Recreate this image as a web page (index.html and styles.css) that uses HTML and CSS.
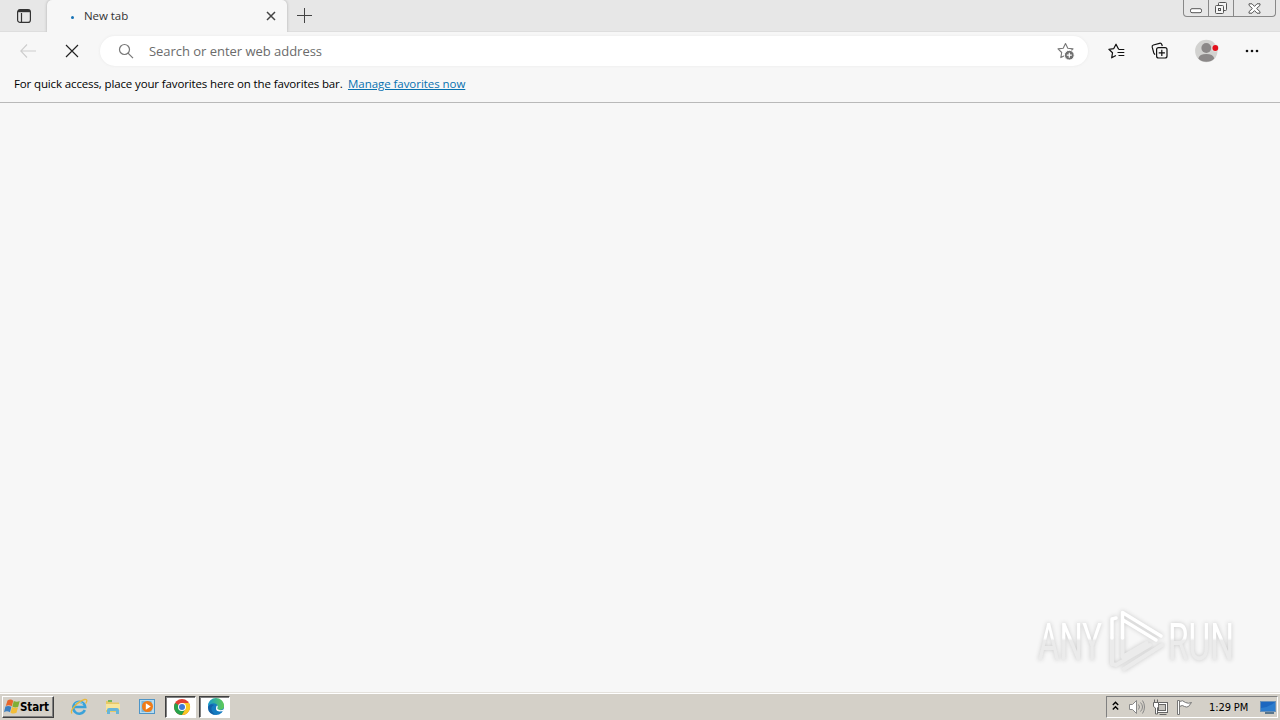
FILE: index.html
```html
<!DOCTYPE html>
<html lang="en">
<head>
	<meta charset="utf-8">
	<title>New tab</title>
	<link rel="stylesheet" href="styles.css">
</head>
<body>
	<!-- Title bar with the tab strip and window buttons. -->
	<header class="titlebar">
		<div class="tab-menu">
			<svg width="16" height="16" viewBox="0 0 16 16" fill="none" stroke="#333">
				<rect x="1.6" y="1.6" width="12.8" height="12.8" rx="2.5" stroke-width="1.2"/>
				<path d="M2 3.5h12M5.500 5v9" stroke-width="1.2"/>
				<path d="M2 3h12" stroke-width="2.400"/>
			</svg>
		</div>
		<div class="tab">
			<span class="spinner"></span>
			<span class="tab-title">New tab</span>
			<svg class="tab-close" width="10" height="10" viewBox="0 0 10 10" stroke="#444" stroke-width="1.500"><path d="M1 1l8 8M9 1l-8 8"/></svg>
		</div>
		<svg class="new-tab" width="15" height="15" viewBox="0 0 15 15" stroke="#444"><path d="M7.5 0v15M0 7.5h15"/></svg>
		<div class="window-buttons">
			<div class="win-btn minimize">
				<svg width="13" height="6" viewBox="0 0 13 6"><rect x=".5" y=".7" width="11" height="4" rx="1.5" fill="#fff" stroke="#555"/></svg>
			</div>
			<div class="win-btn restore">
				<svg width="14" height="14" viewBox="0 0 14 14" fill="#f5f5f5" stroke="#555"><rect x="4.500" y="1.500" width="8" height="8" rx="1"/><rect x="1.500" y="4.500" width="8" height="8" rx="1"/><rect x="4.500" y="7.500" width="2" height="2"/></svg>
			</div>
			<div class="win-btn close">
				<svg width="13" height="11" viewBox="0 0 13 11"><path d="M1 .8h3l2.500 2.600L9 .8h3v1.500L8.600 5.500 12 8.700v1.500H9L6.500 7.600 4 10.200H1V8.700l3.400-3.200L1 2.300z" fill="#fff" stroke="#555"/></svg>
			</div>
		</div>
	</header>

	<!-- Navigation buttons and the address bar. -->
	<nav class="toolbar">
		<svg class="back" width="16" height="14" viewBox="0 0 16 14" fill="none" stroke="#cdcdcd" stroke-width="1.1"><path d="M7 .5L.8 7 7 13.500M1 7h15"/></svg>
		<svg class="stop" width="14" height="14" viewBox="0 0 14 14" stroke="#222" stroke-width="1.150"><path d="M1 1l12 12M13 1L1 13"/></svg>
		<div class="address">
			<svg class="search" width="16" height="16" viewBox="0 0 16 16" fill="none" stroke="#777" stroke-width="1.200"><circle cx="6.500" cy="6.500" r="5"/><path d="M10 10.100l5 5"/></svg>
			<span class="address-text">Search or enter web address</span>
			<svg class="add-favorite" width="19" height="19" viewBox="0 0 19 19" fill="none" stroke="#777">
				<path d="M8.500 1.500l2.300 4.700 5.200.7-3.800 3.600.9 5.100-4.600-2.400-4.700 2.400.9-5.100L1 6.900l5.200-.7z" stroke-width="1.100" stroke-linejoin="round"/>
				<circle cx="12.300" cy="13.200" r="4.900" fill="#707070" stroke="#fff"/>
				<path d="M12.300 10.700v5M9.800 13.200h5" stroke="#fff" stroke-width="1.200"/>
			</svg>
		</div>
		<svg class="favorites-icon" width="18" height="17" viewBox="0 0 18 17" fill="none" stroke="#111" stroke-width="1.200" stroke-linejoin="round"><path d="M11 5.800l-.8-.2L8 1.200 5.800 5.600l-4.900.7 3.600 3.500-.8 5 4.200-2.300M10.500 6.500h5.800M9.500 9.500h6.800M10.500 12.500h5.800"/></svg>
		<svg class="collections" width="18" height="18" viewBox="0 0 18 18" fill="none" stroke="#111" stroke-width="1.200"><path d="M4 12.700L2.800 11 1.200 5.200Q.8 3.500 2.400 3L8.500 1.300q1.700-.4 2.300 1.200l.5 1.700"/><rect x="5.600" y="5.600" width="10.400" height="10.400" rx="2"/><path d="M10.800 7.700v6.200M7.700 10.800h6.200"/></svg>
		<div class="profile">
			<svg width="24" height="24" viewBox="0 0 24 24"><circle cx="11.300" cy="12" r="11.200" fill="#d2d2d0"/><circle cx="11.300" cy="9" r="4.900" fill="#8b8888"/><path d="M3.300 19.500q1.200-4.400 8-4.400t8 4.400q-3 3.300-8 3.300t-8-3.300z" fill="#8b8888"/><circle cx="20.300" cy="9" r="3.600" fill="#e6ece9"/><circle cx="20.300" cy="9" r="2.900" fill="#e3101c"/></svg>
		</div>
		<svg class="more" width="14" height="4" viewBox="0 0 14 4" fill="#111"><circle cx="2" cy="2" r="1.300"/><circle cx="7" cy="2" r="1.300"/><circle cx="12" cy="2" r="1.300"/></svg>
	</nav>

	<div class="favorites-bar">
		<span class="favorites-text">For quick access, place your favorites here on the favorites bar.</span>
		<a class="favorites-link" href="#">Manage favorites now</a>
	</div>

	<!-- Empty page area, the watermark lies over it. -->
	<main class="page">
		<svg class="watermark" width="230" height="76" viewBox="0 0 230 76">
			<defs>
				<linearGradient id="fade" x1="0" y1="-38" x2="0" y2="0" gradientUnits="userSpaceOnUse">
					<stop offset=".5" stop-color="#fff"/>
					<stop offset=".56" stop-color="#ebebeb"/>
				</linearGradient>
			</defs>
			<g fill="url(#fade)" font-size="46">
				<text transform="translate(8 53.5) scale(1 1.130)" textLength="64" lengthAdjust="spacingAndGlyphs">ANY</text>
				<text transform="translate(138 53.5) scale(1 1.130)" textLength="66" lengthAdjust="spacingAndGlyphs">RUN</text>
			</g>
			<g fill="none" stroke-width="4" stroke-linejoin="round" stroke-linecap="round">
				<path d="M82 32v26l4 1 34-20M92.500 32v19l24-14M94 63l38-24" stroke="#ebebeb"/>
				<path d="M86 12l-4 1v19M92.500 32V6.500L131 30M93 14l33 20" stroke="#fff" stroke-width="3.500"/>
			</g>
		</svg>
	</main>

	<footer class="taskbar">
		<div class="start">
			<svg width="16" height="16" viewBox="0 0 16 16"><path d="M3.500 1.500q3-2 5.800.2L7.800 7.300q-3-1.800-6-.2z" fill="#e8662b"/><path d="M9.800 2q3 1.500 5.900.1L14.200 7.700q-3 1.500-5.900-.2z" fill="#80ae35"/><path d="M1.400 7.600q3-1.500 6 .2L6 13.300q-3-1.800-6-.1z" fill="#3c7fc0"/><path d="M8 8.100q3 1.500 6 .1l-1.500 5.600q-3 1.600-6-.1z" fill="#f2bd38"/></svg>
			<span>Start</span>
		</div>
		<div class="quick-launch">
			<svg width="18" height="18" viewBox="0 0 18 18" fill="none"><path d="M14.800 12A6 6 0 1 1 15.200 9H4" stroke="#3ba2d9" stroke-width="2.500"/><path d="M5 6q4-4 8 0" stroke="#81cef0"/><path d="M2 15.500C-1 12 9 3 14.500 1.500q4-.5 1.200 4" stroke="#e9b83b" stroke-width="1.300"/></svg>
			<svg width="18" height="18" viewBox="0 0 18 18"><path d="M2 3h5l1 1.500h7V14H2z" fill="#e7c966"/><path d="M4 2h4v2H4z" fill="#75b65b"/><path d="M2 6h14v6H2z" fill="#f7e59b"/><path d="M3 16v-4q0-2 2-2h8q2 0 2 2v4h-3v-3H6v3z" fill="#67b5d8"/></svg>
			<svg width="18" height="18" viewBox="0 0 18 18"><rect x="1.500" y="1.500" width="15" height="14" fill="#b8dcef" stroke="#4e95c7"/><rect x="3.500" y="3" width="10" height="11" fill="#77b5dc"/><circle cx="9.500" cy="8.500" r="5.500" fill="#f07b16"/><path d="M7.800 5.300v6.400l5-3.200z" fill="#fff"/></svg>
		</div>
		<div class="tasks">
			<div class="task">
				<svg width="18" height="18" viewBox="0 0 18 18"><circle cx="9" cy="9" r="8" fill="#e34133"/><path d="M2.100 5A8 8 0 0 0 9 17l3.500-6L9 9z" fill="#27a34b"/><path d="M9 17a8 8 0 0 0 7-12H9l3.500 6z" fill="#f9c821"/><circle cx="9" cy="9" r="4" fill="#fff"/><circle cx="9" cy="9" r="3" fill="#3f79d8"/></svg>
			</div>
			<div class="task">
				<svg width="18" height="18" viewBox="0 0 18 18"><defs><linearGradient id="edge"><stop stop-color="#159ccf"/><stop offset="1" stop-color="#62cc51"/></linearGradient></defs><circle cx="9" cy="9" r="8" fill="#147bc0"/><path d="M1 8a8 8 0 0 1 16 0q0 4-5 4-3 0-2-2Q12 7 8 5.500 4 4.500 1 8z" fill="url(#edge)"/><path d="M9.500 8q-2 5 3 5.500 3 0 5-1.500v-1q-2 1.500-5 1-3-1-2-2.500.7-1-.2-2z" fill="#fff"/><path d="M1 9q2-4 6-2-4 2-2 6t5 4Q1 17 1 9z" fill="#1261a7"/></svg>
			</div>
		</div>
		<div class="tray">
			<svg class="expand" width="7" height="10" viewBox="0 0 7 10" fill="none" stroke="#000" stroke-width="1.400"><path d="M.8 4L3.500 1.300 6.200 4M.8 8.500l2.700-2.700 2.700 2.700"/></svg>
			<svg width="17" height="16" viewBox="0 0 17 16" fill="none" stroke="#888"><path d="M1.500 5.500h3l4-4v13l-4-4h-3z" fill="#fff"/><path d="M10.500 5.500q2 2.500 0 5M12.500 3.500q4 4.500 0 9M14.500 1.500q4 6.500 0 13"/></svg>
			<svg width="17" height="17" viewBox="0 0 17 17" fill="#fff" stroke="#666"><rect x="4.500" y="3.500" width="11" height="10"/><rect x="6.500" y="5.500" width="7" height="6" fill="#c6c4bf"/><path d="M7.500 15.500h7" fill="none"/><path d="M2.500.5v3M5.500.5v3M1.500 3.500h5v4l-1 1.500v6h-2V9l-2-1.500z"/></svg>
			<svg width="17" height="17" viewBox="0 0 17 17" fill="#fff" stroke="#777"><path d="M1.500 1.500h2v14h-2zM3.500 2.500q3-2 6 1 3 1.500 6 0l-3 4q-2 1-4 0-2-2-5 0z"/></svg>
			<span class="clock">1:29 PM</span>
			<svg class="desktop" width="16" height="16" viewBox="0 0 16 16"><rect x=".5" y="2.500" width="15" height="10" fill="#1c67bf" stroke="#6a91b8"/><path d="M1 9q7 0 14-6v9H1z" fill="#2c7ccd"/><path d="M5 14h9" stroke="#315878" stroke-width="1.500"/></svg>
		</div>
	</footer>
</body>
</html>
```
FILE: styles.css
```css
* {
	box-sizing: border-box;
}

body {
	display: flex;
	flex-direction: column;
	width: 1280px;
	height: 720px;
	margin: 0;
	overflow: hidden;
	background: #f7f7f7;
	color: #000;
	font-family: "Open Sans", "Noto Sans", sans-serif;
	font-size: 12px;
}

svg {
	display: block;
	flex-shrink: 0;
}

/* Title bar */
.titlebar {
	display: flex;
	height: 32px;
	background: #e7e7e7;
	border-bottom: 1px solid #dedede;
}

.tab-menu {
	width: 47px;
	padding: 8px 0 0 16px;
}

.tab {
	display: flex;
	align-items: center;
	width: 240px;
	height: 32px;
	padding: 0 11px 0 24px;
	background: #f7f7f7;
	border-radius: 5px 5px 0 0;
	box-shadow: 0 0 3px #aaa;
	clip-path: inset(0 -3px 0 -3px);
}

.spinner {
	width: 3px;
	height: 3px;
	margin-top: 2px;
	border-radius: 50%;
	background: #1672b5;
}

.tab-title {
	margin: -2px 0 0 10px;
	color: #333;
	font-size: 11.5px;
	letter-spacing: -.05px;
}

.tab-close {
	margin-left: auto;
}

.new-tab {
	margin: 8px 0 0 10px;
}

.window-buttons {
	display: flex;
	height: 17px;
	margin: 0 4px 0 auto;
	border: 1px solid #888;
	border-top: 0;
	border-radius: 0 0 4px 4px;
}

.win-btn {
	display: flex;
	align-items: center;
	justify-content: center;
	width: 25px;
}

.win-btn + .win-btn {
	border-left: 1px solid #888;
}

.win-btn.minimize {
	width: 24px;
	padding-top: 5px;
}

.win-btn.close {
	width: 42px;
}

/* Toolbar */
.toolbar {
	display: flex;
	align-items: center;
	height: 38px;
	padding-left: 20px;
}

.stop {
	margin-left: 29px;
}

.address {
	display: flex;
	align-items: center;
	width: 988px;
	height: 30px;
	margin-left: 21px;
	padding: 0 12px 0 18px;
	border-radius: 15px;
	background: #fff;
	box-shadow: 0 0 3px #e8e8e8;
}

.address-text {
	margin-left: 15px;
	color: #6b6b6b;
	font-size: 13px;
	letter-spacing: -.03px;
}

.add-favorite {
	margin-left: auto;
}

.favorites-icon {
	margin-left: 20px;
}

.collections {
	margin-left: 25px;
}

.profile {
	margin-left: 26px;
}

.more {
	margin-left: 26px;
}

/* Favorites bar */
.favorites-bar {
	display: flex;
	height: 33px;
	padding: 5px 14px;
	border-bottom: 1px solid #b9b9b9;
	font-size: 11.5px;
	line-height: 17px;
	white-space: nowrap;
}

.favorites-text {
	width: 334px;
	letter-spacing: -.13px;
}

.favorites-link {
	color: #0872b0;
	letter-spacing: -.05px;
}

/* Page */
.page {
	position: relative;
	flex: 1;
}

.watermark {
	position: absolute;
	right: 20px;
	bottom: 10px;
	font-family: Roboto, sans-serif;
	filter: drop-shadow(0 0 2px #c8c8c8);
}

/* Taskbar */
.taskbar {
	display: flex;
	align-items: center;
	height: 28px;
	padding: 2px 2px 1px 2px;
	border-top: 1px solid #e4e1dc;
	box-shadow: inset 0 1px #fff;
	background: #d4d0c8;
}

.start {
	display: flex;
	align-items: center;
	width: 52px;
	height: 22px;
	padding-left: 1px;
	border: 1px solid;
	border-color: #fff #404040 #404040 #fff;
	box-shadow: inset -1px -1px #808080;
	font-family: "DejaVu Sans Condensed", "DejaVu Sans", sans-serif;
	font-size: 11.5px;
	font-weight: bold;
	letter-spacing: -.1px;
}

.quick-launch {
	display: flex;
	gap: 16px;
	margin-left: 16px;
}

.tasks {
	display: flex;
	gap: 3px;
	margin-left: 9px;
}

.task {
	display: flex;
	align-items: center;
	justify-content: center;
	width: 31px;
	height: 22px;
	padding-left: 2px;
	border: 1px solid;
	border-color: #404040 #fff #fff #404040;
	box-shadow: inset 1px 1px #808080;
	background: #fff;
}

.tray {
	display: flex;
	align-items: center;
	gap: 7px;
	width: 172px;
	height: 22px;
	margin-left: auto;
	padding: 0 1px 0 5px;
	border: 1px solid;
	border-color: #808080 #fff #fff #808080;
}

.expand {
	margin: -3px 2px 0 0;
}

.clock {
	margin-left: 9px;
	font-family: "DejaVu Sans Condensed", "DejaVu Sans", sans-serif;
	font-size: 11px;
	letter-spacing: -.1px;
	white-space: nowrap;
}

.desktop {
	margin-left: auto;
}
```
